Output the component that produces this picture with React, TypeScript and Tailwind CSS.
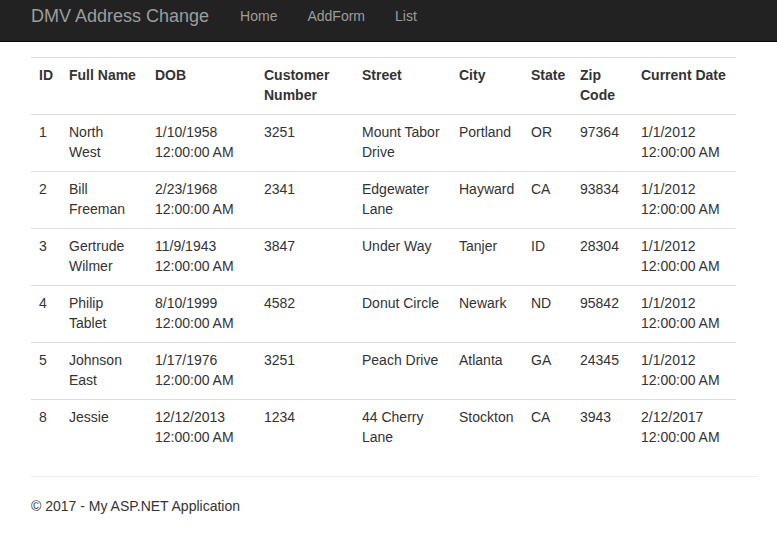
import React from "react";

const rows: React.ReactNode[][] = [
  ["1", <>North<br />West</>, "1/10/1958 12:00:00 AM", "3251", "Mount Tabor Drive", "Portland", "OR", "97364", "1/1/2012 12:00:00 AM"],
  ["2", "Bill Freeman", "2/23/1968 12:00:00 AM", "2341", "Edgewater Lane", "Hayward", "CA", "93834", "1/1/2012 12:00:00 AM"],
  ["3", "Gertrude Wilmer", "11/9/1943 12:00:00 AM", "3847", "Under Way", "Tanjer", "ID", "28304", "1/1/2012 12:00:00 AM"],
  ["4", "Philip Tablet", "8/10/1999 12:00:00 AM", "4582", "Donut Circle", "Newark", "ND", "95842", "1/1/2012 12:00:00 AM"],
  ["5", "Johnson East", "1/17/1976 12:00:00 AM", "3251", "Peach Drive", "Atlanta", "GA", "24345", "1/1/2012 12:00:00 AM"],
  ["8", "Jessie", "12/12/2013 12:00:00 AM", "1234", "44 Cherry Lane", "Stockton", "CA", "3943", "2/12/2017 12:00:00 AM"],
];

const headers = ["ID", "Full Name", "DOB", "Customer Number", "Street", "City", "State", "Zip Code", "Current Date"];
const widths = ["w-[30px]", "w-[86px]", "w-[109px]", "w-[98px]", "w-[97px]", "w-[72px]", "w-[49px]", "w-[61px]", "w-[103px]"];

export default function App() {
  return (
    <div className="min-h-[537px] bg-white text-[#333] text-[14px] leading-[20px]" style={{ fontFamily: '"Liberation Sans", Arial, sans-serif' }}>
      <div className="h-[42px] bg-[#222] border-b border-[#080808] flex items-center pl-[31px]">
        <span className="text-[18px] text-[#9d9d9d] leading-[20px] mb-[10px] mr-[15px]">DMV Address Change</span>
        <nav className="flex ml-[1px] mb-[9px]">
          {["Home", "AddForm", "List"].map((l) => (
            <span key={l} className="px-[15px] text-[#9d9d9d]">{l}</span>
          ))}
        </nav>
      </div>
      <div className="pl-[31px] pt-[15px]">
        <table className="w-[705px] border-collapse table-fixed mb-[20px]">
          <tbody>
            <tr className="border-t border-[#ddd]">
              {headers.map((h, i) => (
                <th key={h} className={`${widths[i]} px-[8px] pt-[7px] pb-[9px] text-left align-top font-bold`}>{h}</th>
              ))}
            </tr>
            {rows.map((r, ri) => (
              <tr key={ri} className="border-t border-[#ddd]">
                {r.map((c, i) => (
                  <td key={i} className="px-[8px] pt-[7px] pb-[9px] align-top">{c}</td>
                ))}
              </tr>
            ))}
          </tbody>
        </table>
        <div className="w-[727px] border-t border-[#eee]" />
        <p className="mt-[19px]">© 2017 - My ASP.NET Application</p>
      </div>
    </div>
  );
}
